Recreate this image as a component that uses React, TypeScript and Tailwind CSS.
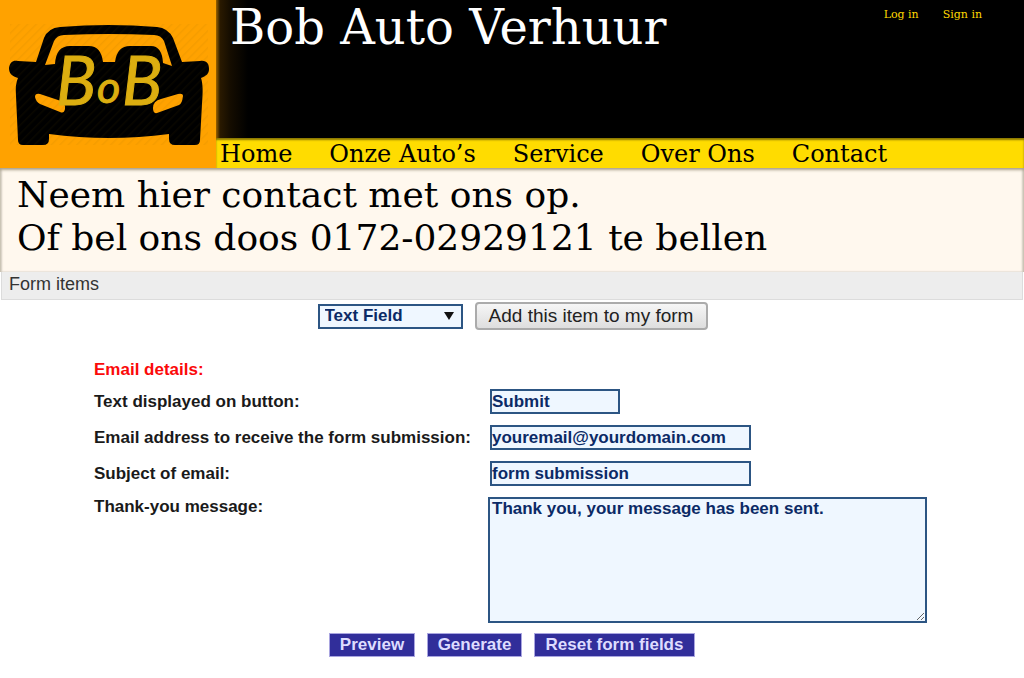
import React from 'react';

const serif = "font-['DejaVu_Serif',serif]";

function Logo() {
  return (
    <svg viewBox="0 0 216 168" className="block h-[168px] w-[216px]" role="img" aria-label="BoB">
      <defs>
        <pattern id="stripes" width="6" height="6" patternUnits="userSpaceOnUse" patternTransform="rotate(45)">
          <rect width="1.5" height="6" fill="#7a5200" opacity="0.08" />
        </pattern>
      </defs>
      <rect width="216" height="168" fill="#ffa200" />
      <path
        fill="#000"
        fillRule="evenodd"
        d="M36 62 L44 38 Q48 28 60 27 Q109 23 157 27 Q168 28 173 38 L182 62 L200 61 C207 60 209 64 209 69 C209 74 206 76 201 78 C203 84 203 92 202 104 L200 140 Q200 145 195 145 H175 Q169 145 169 139 V134 Q109 142 49 134 V139 Q49 145 43 145 H23 Q18 145 18 140 L16 96 Q15 84 18 78 C12 76 9 74 9 68 C10 62 13 60 18 61 Z
           M45 65 L54 41 Q57 35 64 35 Q109 33 154 35 Q161 35 164 41 L172 66 L163 63 Q162 46 151 46 H130 Q117 46 115 62 H103 Q101 46 89 46 H70 Q56 46 55 64 Z
           M35 97 Q35 93 40 94 L58 100 Q66 102 65 109 Q64 114 60 112 L40 104 Q36 102 35 97 Z
           M183 96 Q183 93 178 94 L161 99 Q153 101 153 108 Q153 114 157 113 L179 105 Q182 104 183 96 Z"
      />
      <rect x="10" y="24" width="198" height="121" fill="url(#stripes)" />
      <g fill="#dcae10" stroke="#dcae10" strokeWidth="1" fontFamily="Lato, sans-serif" fontStyle="italic">
        <text x="56" y="105" fontSize="67">B</text>
        <text x="97" y="103" fontSize="45">o</text>
        <text x="122" y="105" fontSize="67">B</text>
      </g>
    </svg>
  );
}

const links = ['Home', 'Onze Auto’s', 'Service', 'Over Ons', 'Contact'];

const field =
  'border-2 border-[#2c5583] bg-[#eff7ff] p-0 text-[17px] leading-5 font-bold text-[#0b2a66] outline-none';

function Row({ id, label, value, width }: { id: string; label: string; value: string; width: string }) {
  return (
    <>
      <label htmlFor={id} className="leading-[25px]">{label}</label>
      <div className="flex pl-0.5">
        <input id={id} type="text" defaultValue={value} className={`${field} h-[25px] ${width}`} />
      </div>
    </>
  );
}

export default function App() {
  return (
    <div className="min-h-screen bg-white font-['Liberation_Sans',Arial,sans-serif] text-black">
      <header className="flex bg-black">
        <a href="#home" className="shrink-0"><Logo /></a>
        <div className="flex min-w-0 flex-1 flex-col">
          <div className="flex flex-1 items-start justify-between bg-[linear-gradient(to_right,#9a6200_0,#2a1a00_4px,#150d00_14px,#000_32px)] pr-[42px] pl-[14px]">
            <h1 className={`${serif} text-[48px] leading-[54px] whitespace-nowrap text-white`}>Bob Auto Verhuur</h1>
            <div className={`${serif} flex gap-6 pt-2 text-[11px] leading-[14px] text-[#ffd800]`}>
              <a href="#login">Log in</a>
              <a href="#signin">Sign in</a>
            </div>
          </div>
          <nav className={`${serif} flex h-[30px] gap-[37px] bg-[#ffdc00] pl-1 text-[24px] leading-[32px] whitespace-nowrap shadow-[inset_0_2px_2px_#8a7700]`}>
            {links.map((l) => (
              <a key={l} href="#page">{l}</a>
            ))}
          </nav>
        </div>
      </header>

      <main>
        <section className="bg-[#fff8ee] px-[17px] pt-[5px] pb-[13px] shadow-[inset_0_2px_3px_#aaa18c,inset_2px_0_2px_#dcd6cc,inset_-2px_0_2px_#dcd6cc]">
          <h2 className={`${serif} text-[36px] leading-[43px]`}>
            Neem hier contact met ons op.<br />Of bel ons doos 0172-02929121 te bellen
          </h2>
        </section>
        <form onSubmit={(e) => e.preventDefault()}>
          <h3 className="mx-px h-7 border border-t-0 border-[#dcdcdc] bg-[#ededed] pl-[7px] text-[18px] leading-6 text-[#333]">Form items</h3>
          <div className="mt-[2px] flex items-center justify-center gap-3 pl-px">
            <div className="relative">
              <select aria-label="Form item type" className={`${field} block h-[25px] w-[145px] appearance-none pl-[5px]`}>
                <option>Text Field</option>
              </select>
              <svg viewBox="0 0 10 8" className="pointer-events-none absolute top-2 right-[9px] h-2 w-2.5"><path d="M0 0H10L5 8Z" fill="#111" /></svg>
            </div>
            <button type="button" className="h-7 w-[233px] rounded-sm border-2 border-[#ababab] bg-linear-to-b from-[#f6f6f6] to-[#dedede] text-[19px] leading-6 whitespace-nowrap text-[#222]">Add this item to my form</button>
          </div>

          <div className="mx-auto w-full max-w-[836px] pt-7 text-[17px] font-bold text-[#1a1a1a]">
            <h4 className="leading-6 text-[#fb0a0a]">Email details:</h4>
            <div className="mt-[7px] grid grid-cols-[394px_1fr] gap-y-[11px]">
              <Row id="button" label="Text displayed on button:" value="Submit" width="w-[130px]" />
              <Row id="email" label="Email address to receive the form submission:" value="youremail@yourdomain.com" width="w-[261px]" />
              <Row id="subject" label="Subject of email:" value="form submission" width="w-[261px]" />
              <label htmlFor="thanks" className="leading-5">Thank-you message:</label>
              <textarea id="thanks" defaultValue="Thank you, your message has been sent." className={`${field} block h-[126px] w-full max-w-[439px] resize pl-0.5`} />
            </div>
          </div>

          <div className="mt-2.5 flex justify-center gap-3 pb-6 text-[17px] leading-5 font-bold text-[#dedcff]">
            <button type="button" className="h-6 w-[86px] border border-[#a9a5e0] bg-[#312e9a]">Preview</button>
            <button type="button" className="h-6 w-[95px] border border-[#a9a5e0] bg-[#312e9a]">Generate</button>
            <button type="reset" className="h-6 w-[161px] border border-[#a9a5e0] bg-[#312e9a]">Reset form fields</button>
          </div>
        </form>
      </main>
    </div>
  );
}
